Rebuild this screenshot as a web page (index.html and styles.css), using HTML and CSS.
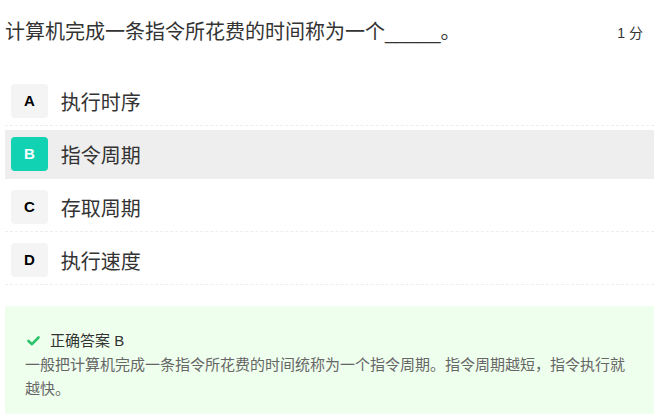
FILE: index.html
```html
<!DOCTYPE html>
<html lang="zh-CN">
<head>
    <meta charset="UTF-8">
    <meta name="viewport" content="width=device-width, initial-scale=1.0">
    <title>单选题</title>
    <link rel="stylesheet" href="styles.css">
</head>
<body>
    <div class="question">
        <div class="question-head">
            <div class="question-title">计算机完成一条指令所花费的时间称为一个_____。</div>
            <div class="question-score">1 分</div>
        </div>

        <div class="options">
            <div class="option">
                <span class="option-key">A</span>
                <span class="option-text">执行时序</span>
            </div>
            <div class="option selected">
                <span class="option-key">B</span>
                <span class="option-text">指令周期</span>
            </div>
            <div class="option">
                <span class="option-key">C</span>
                <span class="option-text">存取周期</span>
            </div>
            <div class="option">
                <span class="option-key">D</span>
                <span class="option-text">执行速度</span>
            </div>
        </div>

        <div class="answer">
            <div class="answer-title">
                <svg class="check" width="13" height="10" viewBox="0 0 13 10">
                    <polyline points="1.5,5 5,8.2 11.5,1.5" fill="none" stroke="#2bc46b" stroke-width="2.6" stroke-linecap="round" stroke-linejoin="round"/>
                </svg>
                正确答案 B
            </div>
            <div class="answer-text">一般把计算机完成一条指令所花费的时间统称为一个指令周期。指令周期越短，指令执行就越快。</div>
        </div>
    </div>
</body>
</html>
```

FILE: styles.css
```css
body {
    margin: 0;
    font-family: "Liberation Sans", "Noto Sans CJK SC", sans-serif;
    color: #333;
    background: #fff;
}
.question {
    padding: 0 4px 0 5px;
}
.question-head {
    display: flex;
    justify-content: space-between;
    align-items: center;
    padding: 17px 11px 0 0;
    margin-bottom: 30px;
}
.question-title {
    font-size: 20px;
    line-height: 30px;
    color: #333;
}
.question-score {
    font-size: 14px;
    color: #333;
}
.option {
    display: flex;
    align-items: center;
    padding: 7px 6px;
    border-bottom: 1px dashed #eee;
    margin-bottom: 4px;
}
.option.selected {
    background-color: #eee;
}
.option-key {
    display: inline-block;
    height: 34px;
    line-height: 34px;
    padding: 0 13px;
    border-radius: 4px;
    background-color: #f4f4f4;
    font-size: 15px;
    font-weight: bold;
    color: #000;
}
.selected .option-key {
    background-color: #12d2b4;
    color: #fff;
}
.option-text {
    margin-left: 13px;
    font-size: 20px;
    color: #333;
}
.answer {
    margin-top: 21px;
    background-color: #efffee;
    padding: 23px 20px 30px;
}
.answer-title {
    display: flex;
    align-items: center;
    font-size: 15px;
    line-height: 24px;
    color: #333;
}
.check {
    margin: 0 10px 0 2px;
}
.answer-text {
    font-size: 15px;
    line-height: 24px;
    color: #666;
}
```
